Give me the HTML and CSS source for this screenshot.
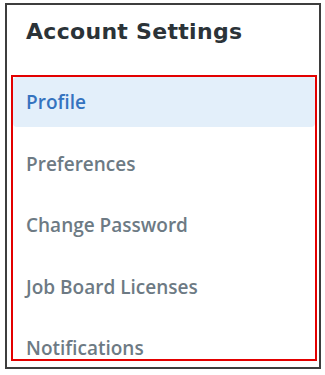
FILE: index.html
```html
<!DOCTYPE html>
<html lang="en">

<head>
    <meta charset="UTF-8">
    <meta name="viewport" content="width=device-width, initial-scale=1.0">
    <title>Account Settings</title>
    <link rel="stylesheet" href="styles.css">
</head>

<body>
    <div class="panel">
        <h2 class="panel-title">Account Settings</h2>
        <ul class="menu">
            <li class="active"><a href="javascript:;">Profile</a></li>
            <li><a href="javascript:;">Preferences</a></li>
            <li><a href="javascript:;">Change Password</a></li>
            <li><a href="javascript:;">Job Board Licenses</a></li>
            <li><a href="javascript:;">Notifications</a></li>
        </ul>
    </div>
</body>

</html>
```

FILE: styles.css
```css
* {
    margin: 0;
    padding: 0;
    box-sizing: border-box;
}

body {
    background-color: #fff;
    font-family: "Open Sans", "Noto Sans", sans-serif;
}

a {
    text-decoration: none;
    color: inherit;
}

.panel {
    width: 316px;
    height: 366px;
    margin: 3px 0 0 5px;
    border: 2px solid #3d3d3d;
    display: flex;
    flex-direction: column;
}

.panel-title {
    padding: 12px 0 0 19px;
    margin-bottom: 28px;
    line-height: 30px;
    font-family: "DejaVu Sans", sans-serif;
    font-size: 22px;
    font-weight: 700;
    letter-spacing: 0.3px;
    color: #2b3338;
}

.menu {
    list-style: none;
    height: 286px;
    margin: 0 2px 0 4px;
    border: 2px solid #e30000;
    overflow: hidden;
    display: flex;
    flex-direction: column;
    gap: 11.5px;
}

.menu li {
    flex: none;
    height: 50px;
    line-height: 50px;
    padding-left: 13px;
    font-size: 19px;
    font-weight: 600;
    color: #6d7a84;
    border-radius: 4px;
}

.menu li.active {
    background-color: #e3effa;
    color: #3573bf;
}
```
